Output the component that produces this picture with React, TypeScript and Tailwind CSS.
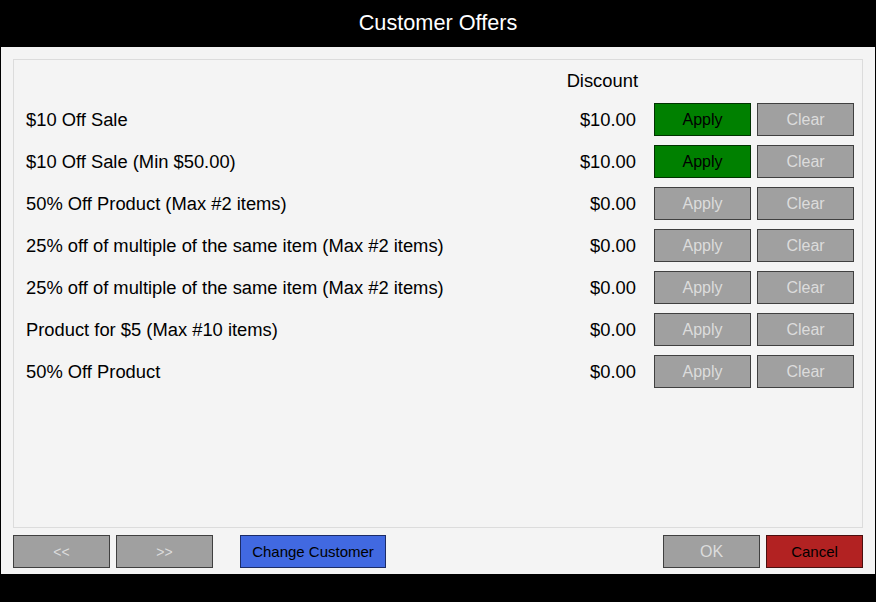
import React from 'react'

type Offer = {
  name: string
  amount: string
  applied: boolean
}

const offers: Offer[] = [
  { name: '$10 Off Sale', amount: '$10.00', applied: true },
  { name: '$10 Off Sale (Min $50.00)', amount: '$10.00', applied: true },
  { name: '50% Off Product (Max #2 items)', amount: '$0.00', applied: false },
  { name: '25% off of multiple of the same item (Max #2 items)', amount: '$0.00', applied: false },
  { name: '25% off of multiple of the same item (Max #2 items)', amount: '$0.00', applied: false },
  { name: 'Product for $5 (Max #10 items)', amount: '$0.00', applied: false },
  { name: '50% Off Product', amount: '$0.00', applied: false },
]

const font = { fontFamily: '"Liberation Sans", Arial, sans-serif' }

function Btn({
  label,
  variant = 'disabled',
  width = 'w-[97px]',
  size = 'text-[16px]',
}: {
  label: string
  variant?: 'disabled' | 'green' | 'blue' | 'red'
  width?: string
  size?: string
}) {
  const styles = {
    disabled: 'bg-[#a0a0a0] border-[#404040] text-[#dcdcdc]',
    green: 'bg-[#008000] border-[#003300] text-black',
    blue: 'bg-[#4169e1] border-[#1c2c66] text-black',
    red: 'bg-[#b22222] border-[#4a0f0f] text-black',
  }
  return (
    <button
      type="button"
      className={`${width} h-[33px] shrink-0 border flex items-center justify-center leading-none ${size} ${styles[variant]}`}
    >
      {label}
    </button>
  )
}

export default function App() {
  return (
    <div className="w-[876px] h-[602px] bg-black flex flex-col" style={font}>
      {/* Title */}
      <div className="h-[47px] flex items-center justify-center text-white text-[21.7px] pb-[1px]">
        Customer Offers
      </div>

      {/* Body */}
      <div className="mx-[1px] h-[527px] bg-[#f4f4f4] flex flex-col px-[12px] pt-[12px] pb-[6px]">
        <div className="h-[469px] border border-[#dcdcdc] flex flex-col">
          <div className="h-[43px] flex items-center pb-[1px]">
            <div className="flex-1" />
            <div className="text-[18.35px] text-black pr-[224px]">Discount</div>
          </div>

          <div className="flex flex-col gap-[9px]">
            {offers.map((o, i) => (
              <div key={i} className="h-[33px] flex items-center pl-[12px] pr-[8px] pt-[1px]">
                <div className="flex-1 text-[18.35px] text-black">{o.name}</div>
                <div className="text-[18.35px] text-black mr-[18px]">{o.amount}</div>
                <div className="flex gap-[6px] -mt-[1px]">
                  <Btn label="Apply" variant={o.applied ? 'green' : 'disabled'} />
                  <Btn label="Clear" />
                </div>
              </div>
            ))}
          </div>
        </div>

        {/* Footer buttons */}
        <div className="mt-[7px] flex items-center">
          <Btn label="<<" size="text-[14px]" />
          <div className="ml-[6px]">
            <Btn label=">>" size="text-[14px]" />
          </div>
          <div className="ml-[27px]">
            <Btn label="Change Customer" variant="blue" width="w-[146px]" size="text-[15px]" />
          </div>
          <div className="flex-1" />
          <Btn label="OK" />
          <div className="ml-[6px]">
            <Btn label="Cancel" variant="red" size="text-[15px]" />
          </div>
        </div>
      </div>
    </div>
  )
}
